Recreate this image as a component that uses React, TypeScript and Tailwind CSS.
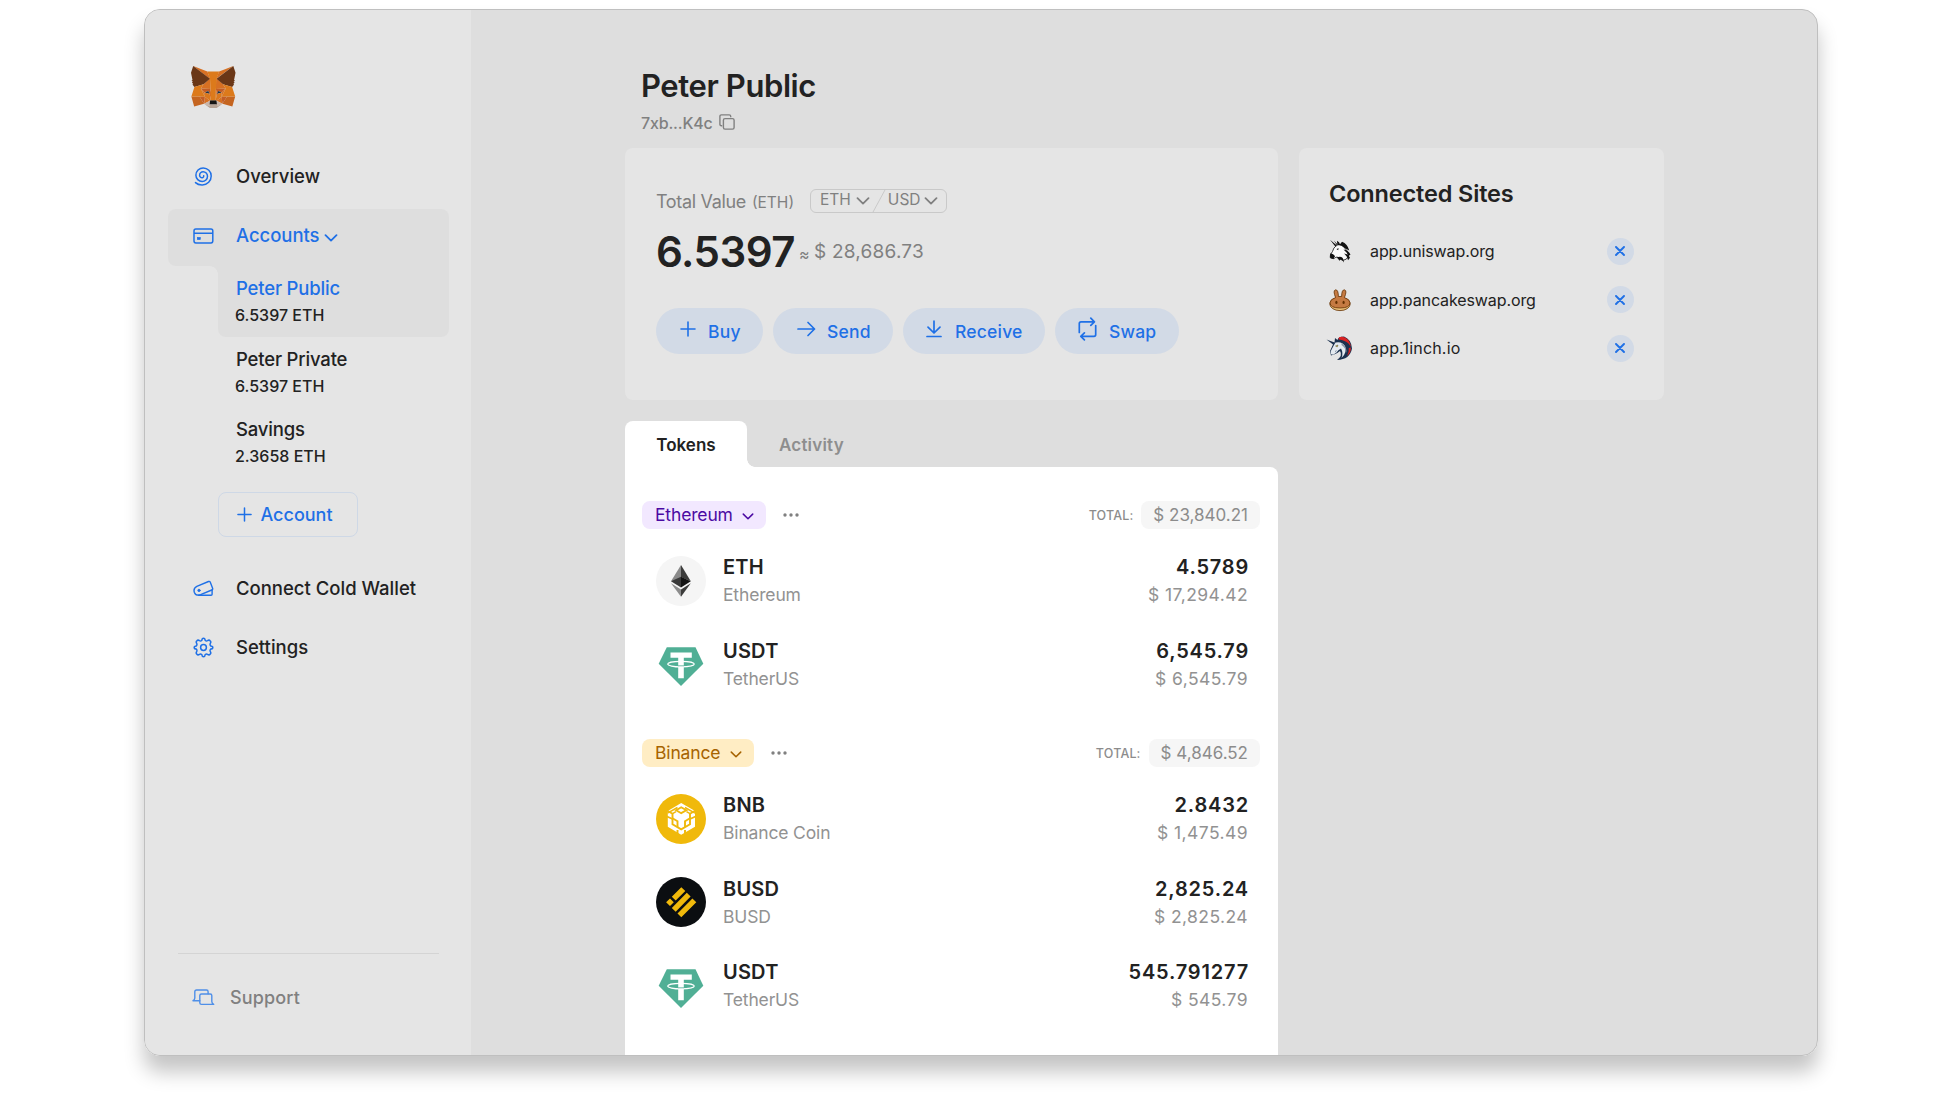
import React from "react";

type IconProps = { className?: string };

function Chevron({ className = "" }: IconProps) {
  return (
    <svg viewBox="0 0 14 8" className={className} fill="none" stroke="currentColor" strokeWidth="1.8" strokeLinecap="round" strokeLinejoin="round">
      <path d="M1.5 1.2 7 6.6l5.500-5.400" />
    </svg>
  );
}

function FoxLogo() {
  return (
    <svg viewBox="1 1 33.6 31.1" preserveAspectRatio="none" className="h-[42px] w-[44.500px] brightness-95">
      <path fill="#E17726" d="M32.958 1 19.824 10.718l2.443-5.727z" />
      <path fill="#E27625" d="M2.663 1 15.680 10.809 13.355 4.991zM10.471 14.515l-2.079 3.136 7.405.337-.247-7.983zM25.151 14.515l-5.158-4.601-.169 8.074 7.405-.337zM10.873 28.872l4.482-2.164-3.858-3.006zM20.266 26.708l4.469 2.164-.611-5.170z" />
      <path fill="#CF6A22" d="M28.230 23.534l-3.495 5.338 7.482 2.060 2.144-7.282zM1.273 23.650l2.130 7.282 7.470-2.060-3.482-5.338z" />
      <path fill="#D5BFB2" d="m24.735 28.872-4.469-2.164.364 2.903-.039 1.231zM10.873 28.872l4.157 1.970-.026-1.231.351-2.903z" />
      <path fill="#CC6228" d="m10.873 28.872.650-5.338-4.132.116zM24.098 23.534l.637 5.338 3.495-5.222zM27.229 17.651l-7.405.337.689 3.796 1.091-2.293 2.637 1.205zM11.393 20.696l2.624-1.205 1.091 2.293.689-3.796-7.405-.337z" />
      <path fill="#233447" d="m15.108 21.784-3.715-1.088 2.624-1.205zM20.513 21.784l1.091-2.293 2.637 1.205z" />
      <path fill="#E27525" d="m8.392 17.651 3.105 6.051-.104-3.006zM24.241 20.696l-.117 3.006 3.105-6.051zM15.797 17.988l-.689 3.796.871 4.496.195-5.921zM19.824 17.988l-.364 2.358.182 5.934.871-4.496z" />
      <path fill="#E57D1E" d="m20.513 21.784-.871 4.496.624.428 3.858-3.006.117-3.006zM11.393 20.696l.104 3.006 3.858 3.006.623-.428-.870-4.496z" />
      <path fill="#C0AC9D" d="m20.591 30.842.039-1.231-.338-.286h-4.963l-.325.286.026 1.231-4.157-1.970 1.455 1.192 2.949 2.035h5.054l2.962-2.035 1.442-1.192z" />
      <path fill="#161616" d="m20.266 26.708-.623-.428h-3.664l-.623.428-.351 2.903.325-.286h4.963l.338.286z" />
      <path fill="#703A18" d="m33.517 11.353 1.104-5.390L32.958 1 20.266 10.394l4.885 4.121 6.897 2.008 1.520-1.775-.662-.479 1.052-.959-.806-.622 1.052-.803zM1 5.963l1.117 5.390-.714.532 1.065.803-.806.622 1.052.959-.662.479 1.520 1.775 6.898-2.008 4.884-4.121L2.662 1z" />
      <path fill="#E8801C" d="m32.048 16.523-6.897-2.008 2.078 3.136-3.105 6.051 4.105-.052h6.132zM10.471 14.515l-6.898 2.008-2.300 7.127h6.118l4.106.052-3.105-6.051zM19.824 17.988l.442-7.594 2-5.403h-8.912l2.001 5.403.442 7.594.169 2.384.013 5.908h3.663l.013-5.908z" />
    </svg>
  );
}

function SpiralIcon() {
  return (
    <svg viewBox="0 0 21 21" className="size-[21px]" fill="none" stroke="currentColor" strokeWidth="1.500" strokeLinecap="round">
      <path d="M2.500 16.600C4.300 18.300 6.500 19 9.400 18.900A8.900 8.900 0 0 0 18.200 9.900A8 8 0 0 0 10.200 1.900A7.300 7.300 0 0 0 2.900 9.200A6.300 6.300 0 0 0 9.200 15.500A5.300 5.300 0 0 0 14.500 10.200A4.400 4.400 0 0 0 10.100 5.800A3.500 3.500 0 0 0 6.600 9.300A2.500 2.500 0 0 0 9.100 11.800A1.800 1.800 0 0 0 10.700 9.700" />
    </svg>
  );
}

function CardIcon() {
  return (
    <svg viewBox="0 0 21 16" className="h-4 w-[21px]" fill="none" stroke="currentColor" strokeWidth="1.500">
      <rect x="1" y="1.100" width="18.800" height="13.800" rx="1.800" />
      <path d="M1 5.300h18.800" />
      <rect x="4.300" y="9.400" width="3" height="2.200" fill="currentColor" strokeWidth=".6" />
    </svg>
  );
}

function TagIcon() {
  return (
    <svg viewBox="0 0 21 17" className="h-[17px] w-[21px]" fill="none" stroke="currentColor" strokeWidth="1.400" strokeLinejoin="round" strokeLinecap="round">
      <path d="M3.800 6.300 15.500 1.500q1.300-.500 1.800.700l2.300 6.100q.400 1.200-.800 1.700L7.600 14.700Q3 16.200 1.400 12.400 0 8.300 3.800 6.300z" />
      <path d="M5.500 15.200h12.600q1 0 1-1V10" />
      <circle cx="6" cy="10.400" r="1.200" fill="currentColor" strokeWidth=".8" />
    </svg>
  );
}

function GearIcon() {
  return (
    <svg viewBox="0 0 21 21" className="size-[21px]" fill="none" stroke="currentColor" strokeWidth="1.500" strokeLinejoin="round">
      <path d="M8.900 3.200Q9 1.200 10.500 1.200T12.100 3.200Q13.300 4.400 14.500 3.700 16.100 2.500 17.100 3.800 18.500 4.900 17.200 6.500 16.600 7.700 17.700 8.900 19.800 9 19.800 10.500T17.700 12.100Q16.600 13.300 17.200 14.500 18.500 16.100 17.100 17.200 16.100 18.500 14.500 17.300 13.300 16.600 12.100 17.800 12 19.800 10.500 19.800T8.900 17.800Q7.700 16.600 6.500 17.300 4.900 18.500 3.900 17.200 2.500 16.100 3.800 14.500 4.400 13.300 3.300 12.100 1.200 12 1.200 10.500T3.300 8.900Q4.400 7.700 3.800 6.500 2.500 4.900 3.900 3.800 4.900 2.500 6.500 3.700 7.700 4.400 8.900 3.200z" />
      <circle cx="10.500" cy="10.500" r="2.900" />
    </svg>
  );
}

function SupportIcon() {
  return (
    <svg viewBox="0 0 23 17" className="h-[17px] w-[23px]" fill="none" stroke="currentColor" strokeWidth="1.400" strokeLinejoin="round" strokeLinecap="round">
      <path d="M7.800 11.700H1q1.800-.800 1.800-2.700V2.700Q2.800 1 4.500 1h10q1.600 0 1.600 1.700v2" />
      <path d="M9.500 5h8.700q1.600 0 1.600 1.600v6q0 1.800 1.900 2.800H9.500q-1.700 0-1.700-1.600V6.600Q7.800 5 9.500 5z" />
    </svg>
  );
}

function PlusIcon({ className = "" }: IconProps) {
  return (
    <svg viewBox="0 0 16 16" className={className} fill="none" stroke="currentColor" strokeWidth="1.600" strokeLinecap="round">
      <path d="M8 1v14M1 8h14" />
    </svg>
  );
}

function SendIcon() {
  return (
    <svg viewBox="0 0 19 16" className="h-4 w-[19px]" fill="none" stroke="currentColor" strokeWidth="1.700" strokeLinecap="round" strokeLinejoin="round">
      <path d="M1 8h16.500M11 1.500 17.500 8 11 14.500" />
    </svg>
  );
}

function ReceiveIcon() {
  return (
    <svg viewBox="0 0 16 18" className="h-[18px] w-4" fill="none" stroke="currentColor" strokeWidth="1.700" strokeLinecap="round" strokeLinejoin="round">
      <path d="M8 1.200v11.500M2 7.200 8 13l6-5.800M1 16.500h14" />
    </svg>
  );
}

function SwapIcon() {
  return (
    <svg viewBox="0 0 19 24" className="h-6 w-[19px]" fill="none" stroke="currentColor" strokeWidth="1.700" strokeLinecap="round" strokeLinejoin="round">
      <path d="M1.300 15.500V6.500q0-1.700 1.700-1.700h13M12.800 1.200l3.600 3.600-3.600 3.500M17.700 8.500v9q0 1.800-1.700 1.800H3M6.400 15.800 2.800 19.300l3.600 3.500" />
    </svg>
  );
}

function CopyIcon() {
  return (
    <svg viewBox="0 0 16 16" className="size-4" fill="none" stroke="currentColor" strokeWidth="1.400">
      <rect x="4.400" y="4.600" width="10.700" height="10.500" rx="1.600" />
      <path d="M3.200 11.700H2.400Q.900 11.700.900 10.200V2.300Q.9.900 2.400.9h7.800q1.500 0 1.500 1.400v1" />
    </svg>
  );
}

function UniswapIcon() {
  return (
    <svg viewBox="0 0 24 24" className="size-6">
      <path fill="#111" d="M2 .8 8.600 6.300 7.300 7.500zM6 1.500l3.800 4.300-.9.600z" />
      <path fill="#fafafa" stroke="#111" strokeWidth=".8" d="M8 7Q11.500 4 15.500 7.500 20 11.500 20.500 17q-1.500 4-6 4.500-3-2.500-5.500-3.500-2 .200-3 1.800L2.200 18.500Q1.700 15.500 4.500 12.500 5.500 8.500 8 7z" />
      <path fill="#111" d="M9.500 5.800Q9 3.800 9 1.800 11.500 3 12 5.300L14 2.800Q19.500 5 21.300 11.500L17 9.300q-3-3.200-7.500-3.500z" />
      <path fill="#111" d="M15.500 10.500q4.500.300 7 5L20.500 17q-1-3.200-5-6.500zM16 14.500q4.500.300 6 4.300L20 21.200q-.500-4-4-6.700z" />
      <path fill="#111" d="M2.300 14.500Q5.500 14 7 17.500L5.300 20 2.500 19.300 2 17zM8.700 18.600q3.800-2 6 .500 1.300 2.500 1.200 4.300-1.400-2.900-3.300-3l-1.200 1.400q-1-1.900-2.700-3.200zM8.500 10l2.200-.8-.6 2z" />
    </svg>
  );
}

function PancakeIcon() {
  return (
    <svg viewBox="0 0 24 24" className="size-6">
      <ellipse cx="12" cy="16" rx="10.200" ry="6.600" fill="#ecc27a" stroke="#633001" strokeWidth=".8" />
      <path fill="#c57a42" stroke="#633001" strokeWidth=".8" d="M7.600 9.600Q4.800 2.600 7.300 1.900 10.300 1.200 10.400 8.500h3.200Q13.700 1.200 16.700 1.900q2.500.700-.300 7.700 5.600 1.700 5.600 5.200 0 5.200-10 5.200T2 14.800q0-3.500 5.600-5.200z" />
      <ellipse cx="8.400" cy="14.400" rx="1.100" ry="1.700" fill="#633001" />
      <ellipse cx="15.600" cy="14.400" rx="1.100" ry="1.700" fill="#633001" />
    </svg>
  );
}

function OneInchIcon() {
  return (
    <svg viewBox="0 0 27 26" className="h-[26px] w-[27px]">
      <path fill="#1b314f" d="M.5 4.500 8.500 7.500 9 3l2.500 2Q12 1.500 18 1.500q7.500 3 8 12Q24 24.500 11 25q6-4.500 3-9-3.500 3-6 3.500L5 20.500 4 16l3-6.500z" />
      <path fill="#d82122" d="M13 2.200q3-.800 6 .300 5.500 3 5.800 9.500-2-4.500-6.300-6Q16 4.500 12.500 4.500zM24.800 12.500q.500 5-3.800 8.500 2.200-4.200 1.800-8z" />
      <path fill="#e4eaf0" d="M9.500 7.500Q16 6 19 11q2.500 6.500-3.500 12 2-5-.500-9.500-3 1.500-4.500 4l-3.300 2.300-2.200-.5-.3-3L8 10z" />
      <path fill="#8795a8" d="M15.500 8q5.500 3.500 5 10-1-5.500-5-8zM9 16l2-1-1.500 2.500z" />
      <path fill="#ffc800" stroke="#1b314f" strokeWidth=".4" d="m9.500 11 2.500-1-.8 2z" />
    </svg>
  );
}

function EthLogo() {
  return (
    <svg viewBox="0 0 50 50" className="size-[50px]">
      <circle cx="25" cy="25" r="25" fill="#f5f5f5" />
      <path fill="#8a8a8a" d="M25 9v16.300H15z" />
      <path fill="#3c3c3b" d="M25 9v12l9.800 4.300z" />
      <path fill="#393939" d="M25 20.700v10.800l-10-6.200z" />
      <path fill="#141414" d="M25 20.700v10.800l9.800-6.200z" />
      <path fill="#8c8c8c" d="M25 33.500v7.300L15 27.300z" />
      <path fill="#3c3c3b" d="M25 33.500v7.300l9.800-13.500z" />
    </svg>
  );
}

function TetherLogo() {
  return (
    <svg viewBox="0 0 50 50" className="size-[50px]">
      <path fill="#50af95" d="M10.800 8.300H39.500L47.300 24.800 25 47 2.700 24.800z" />
      <path fill="#fff" d="M14.500 13.500h21.300v5.300h-8v20.500h-5.600V18.800h-7.700z" />
      <ellipse cx="25" cy="25.100" rx="13.300" ry="2.800" fill="none" stroke="#fff" strokeWidth="1.200" />
      <path stroke="#50af95" strokeWidth=".8" d="M22 26.800h6" />
    </svg>
  );
}

function BnbLogo() {
  return (
    <svg viewBox="0 0 50 50" className="size-[50px]">
      <circle cx="25" cy="25" r="25" fill="#f0b90b" />
      <path fill="#fff" d="M25.200 9 39 17v15.800l-13.800 8-13.400-8V17z" />
      <g fill="none" stroke="#f0b90b" strokeWidth="1.900">
        <path d="M11 16.500l5.500 3.200v10.500L25.200 35.300 34 30.200V19.700l5.500-3.200" />
        <path d="M16.500 19.700 20 17.700M34 19.700l-3.500-2M21.500 13.500 11.500 19.200M29 13.500l10 5.700" strokeWidth="1.500" />
        <path d="M25.200 13.300 30.300 16.300 25.200 19.200 20.200 16.300z" />
        <path d="M16.500 24.300 21.500 27.200V33M34 24.300 29 27.200V33M21.500 36v5M29 36v5M11 22.500l5.500 2.500M39.500 22.500 34 25" />
      </g>
    </svg>
  );
}

function BusdLogo() {
  return (
    <svg viewBox="0 0 50 50" className="size-[50px]">
      <circle cx="25" cy="25" r="25" fill="#0b0e11" />
      <path fill="#f0b90b" d="M25.300 10.300 29.300 14 19.700 23.600 15.800 19.800zM30.800 15.700 34.600 19.600 19.700 34.700 15.800 30.900zM36.400 21.500 40.300 25.300 25.300 40.300 21.500 36.500zM14 21.500l3.800 3.800L14 29.100l-3.900-3.800z" />
    </svg>
  );
}

const accounts = [
  { name: "Peter Public", balance: "6.5397 ETH", active: true },
  { name: "Peter Private", balance: "6.5397 ETH", active: false },
  { name: "Savings", balance: "2.3658 ETH", active: false },
];

function NavRow({ icon, label }: { icon: React.ReactNode; label: string }) {
  return (
    <a className="flex h-[59px] shrink-0 items-center pl-12">
      <span className="flex w-[21px] justify-center text-[#1f70e6]">{icon}</span>
      <span className="ml-[22px] pt-px text-[18.500px] font-medium">{label}</span>
    </a>
  );
}

function Sidebar() {
  return (
    <aside className="flex w-[326px] shrink-0 flex-col bg-[#e5e5e5]">
      <div className="mt-14 ml-[46px] h-[42px]">
        <FoxLogo />
      </div>
      <nav className="mt-[39px] flex flex-col">
        <NavRow icon={<SpiralIcon />} label="Overview" />
        <div className="mt-[3px] ml-[23px] flex h-[57px] w-[280.500px] items-center rounded-t-lg rounded-bl-lg bg-[#dedede] pb-[3px] pl-[25px] text-[#1f70e6]">
          <CardIcon />
          <span className="ml-[22px] text-[18.500px] font-medium tracking-[-0.050px]">Accounts</span>
          <Chevron className="mt-1 ml-[5px] h-2 w-3.5" />
        </div>
        <ul className="ml-[73px] w-[230.500px]">
          {accounts.map((a) => (
            <li key={a.name} className={a.active ? "relative h-[70.500px] rounded-b-lg bg-[#dedede] pt-[9px] pl-[18px] text-[#1f70e6]" : "h-[70.500px] pt-[9px] pl-[18px]"}>
              {a.active && <span className="absolute top-0 -left-2 size-2 bg-[radial-gradient(circle_at_0_100%,transparent_7.500px,#dedede_8px)]" />}
              <div className="text-[18.500px] leading-[26px] font-medium tracking-[-0.180px]">{a.name}</div>
              <div className="-ml-px pt-px text-base leading-[26px] font-[450] text-[#222]">{a.balance}</div>
            </li>
          ))}
        </ul>
        <button className="mt-[14px] ml-[72.500px] flex h-[45px] w-[140.500px] items-center rounded-lg border border-[#ced8e6] pl-[18px] text-[#1f70e6]">
          <PlusIcon className="size-[15px]" />
          <span className="ml-[9px] text-[18px] font-medium">Account</span>
        </button>
        <div className="mt-[22px]">
          <NavRow icon={<TagIcon />} label="Connect Cold Wallet" />
          <NavRow icon={<GearIcon />} label="Settings" />
        </div>
      </nav>
      <div className="mt-auto mr-8 mb-[13px] ml-[33px] flex h-[89px] items-center border-t border-[#d4d4d4] pb-px pl-3.5">
        <span className="text-[#4f8fe8]">
          <SupportIcon />
        </span>
        <span className="ml-[15px] text-[18px] font-medium tracking-[0.150px] text-[#808080]">Support</span>
      </div>
    </aside>
  );
}

const actions = [
  { label: "Buy", icon: <PlusIcon className="size-4" />, cls: "w-[107px] pl-6 gap-3" },
  { label: "Send", icon: <SendIcon />, cls: "w-[120px] pl-6 gap-[11px]" },
  { label: "Receive", icon: <ReceiveIcon />, cls: "w-[142px] pl-[23px] gap-[13px]" },
  { label: "Swap", icon: <SwapIcon />, cls: "w-[124px] pl-[23px] gap-3" },
];

function BalanceCard() {
  return (
    <section className="h-[252px] rounded-lg bg-[#e5e5e5] pt-[41px] pl-[31px]">
      <div className="flex h-6 items-center text-[#808080]">
        <div className="w-[154px] whitespace-nowrap">
          <span className="text-[18px] tracking-[-0.340px]">Total Value</span>
          <span className="ml-1.5 text-[15.500px]">(ETH)</span>
        </div>
        <div className="flex h-6 w-[137px] items-center rounded-md border border-[#c9c9c9] pl-[9px] text-[15.500px]">
          <span className="pb-0.5">ETH</span>
          <Chevron className="ml-[5px] h-2 w-3.5" />
          <svg viewBox="0 0 14 24" className="ml-0.5 h-6 w-3.5">
            <path d="M.5 24 13.500 0" stroke="#c9c9c9" />
          </svg>
          <span className="ml-0.5 pb-0.5">USD</span>
          <Chevron className="ml-[3px] h-2 w-3.5" />
        </div>
      </div>
      <div className="mt-[19px] flex h-10 items-center">
        <span className="w-[143px] pb-px text-[42px] font-semibold tracking-[-0.500px]">6.5397</span>
        <span className="w-[15px] pt-[3px] text-base text-[#808080]">≈</span>
        <span className="text-[19px] tracking-[0.220px] text-[#808080]">$ 28,686.73</span>
      </div>
      <div className="mt-9 flex gap-2.5">
        {actions.map((a) => (
          <button key={a.label} className={`flex h-[45.500px] items-center rounded-full bg-[#d2dae6] text-[#1f70e6] ${a.cls}`}>
            <span className="-mt-[3px]">{a.icon}</span>
            <span className="mt-0.5 text-[17.500px] font-medium tracking-[0.200px]">{a.label}</span>
          </button>
        ))}
      </div>
    </section>
  );
}

const groups = [
  {
    chain: "Ethereum",
    pill: "w-[124px] bg-[#f2e8ff] text-[#4b0aa3]",
    total: "$ 23,840.21",
    rows: [
      { icon: <EthLogo />, sym: "ETH", name: "Ethereum", amt: "4.5789", usd: "$ 17,294.42" },
      { icon: <TetherLogo />, sym: "USDT", name: "TetherUS", amt: "6,545.79", usd: "$ 6,545.79" },
    ],
  },
  {
    chain: "Binance",
    pill: "w-28 bg-[#ffedc4] text-[#a66300]",
    total: "$ 4,846.52",
    rows: [
      { icon: <BnbLogo />, sym: "BNB", name: "Binance Coin", amt: "2.8432", usd: "$ 1,475.49" },
      { icon: <BusdLogo />, sym: "BUSD", name: "BUSD", amt: "2,825.24", usd: "$ 2,825.24" },
      { icon: <TetherLogo />, sym: "USDT", name: "TetherUS", amt: "545.791277", usd: "$ 545.79" },
    ],
  },
];

function TokenPanel() {
  return (
    <section className="flex flex-1 flex-col gap-[33px] rounded-tr-lg bg-white pt-[34px]">
      {groups.map((g) => (
        <div key={g.chain}>
          <div className="flex h-7 items-center pr-[18px] pl-[17px]">
            <div className={`flex h-7 items-center justify-between rounded-lg pr-3 pl-[13px] ${g.pill}`}>
              <span className="text-[17.500px] tracking-[-0.150px]">{g.chain}</span>
              <Chevron className="mt-0.5 h-[7px] w-3" />
            </div>
            <svg viewBox="0 0 16 4" className="ml-[17px] h-1 w-4" fill="#808080">
              <circle cx="2" cy="2" r="1.700" />
              <circle cx="8" cy="2" r="1.700" />
              <circle cx="14" cy="2" r="1.700" />
            </svg>
            <span className="mt-0.5 ml-auto text-[12.500px] font-[450] tracking-[0.150px] text-[#8c8c8c]">TOTAL:</span>
            <span className="ml-2 flex h-7 items-center rounded-lg bg-[#f6f6f6] pt-0.5 pr-3 pl-3 text-[17px] text-[#8c8c8c]">{g.total}</span>
          </div>
          <div className="mt-2.5">
            {g.rows.map((r) => (
              <div key={r.sym} className="flex h-[83.500px] items-center pr-[29px] pl-[31px]">
                {r.icon}
                <div className="ml-[17px] pt-px">
                  <div className="text-[20px] leading-7 font-semibold tracking-[0.200px]">{r.sym}</div>
                  <div className="text-[17.500px] leading-7 tracking-[-0.150px] text-[#929292]">{r.name}</div>
                </div>
                <div className="ml-auto pt-px text-right">
                  <div className="text-[20px] leading-7 font-semibold tracking-[0.800px]">{r.amt}</div>
                  <div className="pr-px text-[17.500px] leading-7 tracking-[0.420px] text-[#929292]">{r.usd}</div>
                </div>
              </div>
            ))}
          </div>
        </div>
      ))}
    </section>
  );
}

const sites = [
  { icon: <UniswapIcon />, host: "app.uniswap.org", cls: "tracking-[-0.100px]" },
  { icon: <PancakeIcon />, host: "app.pancakeswap.org", cls: "tracking-[-0.100px]" },
  { icon: <OneInchIcon />, host: "app.1inch.io", cls: "tracking-[0.180px]" },
];

function ConnectedSites() {
  return (
    <section className="h-[252px] w-[364.500px] rounded-lg bg-[#e5e5e5] pt-[29px] pr-[30px] pl-[30px]">
      <h2 className="pt-px text-[23.500px] leading-8 font-semibold tracking-[-0.150px]">Connected Sites</h2>
      <ul className="mt-[17px]">
        {sites.map((s) => (
          <li key={s.host} className="flex h-[48.500px] items-center">
            <span className="-ml-[5px] flex w-[31px] shrink-0 justify-center">{s.icon}</span>
            <span className={`ml-[15px] text-base ${s.cls}`}>{s.host}</span>
            <button className="ml-auto flex size-[27px] items-center justify-center rounded-full bg-[#d2dae6] text-[#1f70e6]">
              <svg viewBox="0 0 10 10" className="size-2.5" stroke="currentColor" strokeWidth="1.900" strokeLinecap="round">
                <path d="m1 1 8 8M9 1 1 9" />
              </svg>
            </button>
          </li>
        ))}
      </ul>
    </section>
  );
}

export default function App() {
  return (
    <div className="h-[1102px] w-[1960px] overflow-hidden bg-white pt-[9px] pl-36 font-['Inter',sans-serif] text-[#222]">
      <div className="h-[1047px] w-[1674px] rounded-2xl shadow-[0_16px_20px_rgba(0,0,0,0.230)]">
        <div className="flex h-full overflow-hidden rounded-2xl border border-[#bfbfbf] bg-[#dedede]">
          <Sidebar />
          <main className="flex flex-1 flex-col pl-[154px]">
            <header className="mt-14 pl-4">
              <h1 className="text-[31px] leading-10 font-semibold tracking-[-0.400px]">Peter Public</h1>
              <div className="mt-[5px] flex h-6 items-center text-[#808080]">
                <span className="text-base font-[450] tracking-[-0.180px]">7xb...K4c</span>
                <span className="-mt-0.5 ml-1.5">
                  <CopyIcon />
                </span>
              </div>
            </header>
            <div className="mt-[13px] flex flex-1 gap-[21px]">
              <div className="flex w-[653px] flex-col">
                <BalanceCard />
                <div className="mt-[21px] flex h-[46px] text-[17px] font-semibold">
                  <div className="relative flex w-[122px] items-center justify-center rounded-t-lg bg-white pt-1">
                    Tokens
                    <span className="absolute -right-2 bottom-0 size-2 bg-[radial-gradient(circle_at_100%_0,transparent_7.500px,#fff_8px)]" />
                  </div>
                  <div className="flex items-center pt-1 pl-8 tracking-[0.200px] text-[#8e8e8e]">Activity</div>
                </div>
                <TokenPanel />
              </div>
              <ConnectedSites />
            </div>
          </main>
        </div>
      </div>
    </div>
  );
}
